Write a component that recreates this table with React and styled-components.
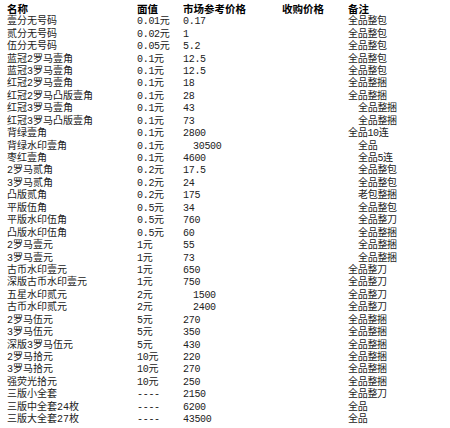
import React from "react";
import styled, { createGlobalStyle } from "styled-components";

const Global = createGlobalStyle`
  html, body { margin: 0; padding: 0; background: #fff; }
  body { font-family: "Liberation Mono", "Noto Sans CJK SC", monospace; }
`;

const Table = styled.div`
  width: 450px;
  height: 428px;
  padding: 2px 0 0 7px;
  box-sizing: border-box;
  overflow: hidden;
`;

const Row = styled.div`
  display: grid;
  grid-template-columns: 130px 46px 99px 66px 1fr;
  height: ${(p) => (p.$head ? "14px" : "12.44px")};
  align-items: center;
  white-space: nowrap;
`;

const Cell = styled.div`
  font-family: "Liberation Mono", "Noto Sans CJK SC", monospace;
  font-size: 10px;
  line-height: 12px;
  color: #222;
  padding-left: ${(p) => (p.$indent ? "10px" : "0")};
  letter-spacing: -0.3px;
`;

const Name = styled(Cell)`
  letter-spacing: 0;
`;

const HeadCell = styled.div`
  font-family: "Noto Sans CJK SC", sans-serif;
  font-weight: 700;
  font-size: 10.5px;
  line-height: 14px;
  color: #000;
`;

const rows = [
  ["壹分无号码", "0.01元", "0.17", "全品整包"],
  ["贰分无号码", "0.02元", "1", "全品整包"],
  ["伍分无号码", "0.05元", "5.2", "全品整包"],
  ["蓝冠2罗马壹角", "0.1元", "12.5", "全品整包"],
  ["蓝冠3罗马壹角", "0.1元", "12.5", "全品整包"],
  ["红冠2罗马壹角", "0.1元", "18", "全品整捆"],
  ["红冠2罗马凸版壹角", "0.1元", "28", "全品整捆"],
  ["红冠3罗马壹角", "0.1元", "43", "全品整捆", false, true],
  ["红冠3罗马凸版壹角", "0.1元", "73", "全品整捆", false, true],
  ["背绿壹角", "0.1元", "2800", "全品10连"],
  ["背绿水印壹角", "0.1元", "30500", "全品", true, true],
  ["枣红壹角", "0.1元", "4600", "全品5连", false, true],
  ["2罗马贰角", "0.2元", "17.5", "全品整包", false, true],
  ["3罗马贰角", "0.2元", "24", "全品整包", false, true],
  ["凸版贰角", "0.2元", "175", "老包整捆", false, true],
  ["平版伍角", "0.5元", "34", "全品整包", false, true],
  ["平版水印伍角", "0.5元", "760", "全品整刀", false, true],
  ["凸版水印伍角", "0.5元", "60", "全品整捆", false, true],
  ["2罗马壹元", "1元", "55", "全品整捆", false, true],
  ["3罗马壹元", "1元", "73", "全品整捆", false, true],
  ["古币水印壹元", "1元", "650", "全品整刀"],
  ["深版古币水印壹元", "1元", "750", "全品整刀"],
  ["五星水印贰元", "2元", "1500", "全品整刀", true],
  ["古币水印贰元", "2元", "2400", "全品整刀", true],
  ["2罗马伍元", "5元", "270", "全品整捆"],
  ["3罗马伍元", "5元", "350", "全品整捆"],
  ["深版3罗马伍元", "5元", "430", "全品整捆"],
  ["2罗马拾元", "10元", "220", "全品整捆"],
  ["3罗马拾元", "10元", "270", "全品整捆"],
  ["强荧光拾元", "10元", "250", "全品整捆"],
  ["三版小全套", "----", "2150", "全品整刀"],
  ["三版中全套24枚", "----", "6200", "全品"],
  ["三版大全套27枚", "----", "43500", "全品"],
];

export default function App() {
  return (
    <>
      <Global />
      <Table>
        <Row $head>
          <HeadCell>名称</HeadCell>
          <HeadCell>面值</HeadCell>
          <HeadCell>市场参考价格</HeadCell>
          <HeadCell>收购价格</HeadCell>
          <HeadCell>备注</HeadCell>
        </Row>
        {rows.map(([name, face, price, note, pi, ni]) => (
          <Row key={name}>
            <Name>{name}</Name>
            <Cell>{face}</Cell>
            <Cell $indent={pi}>{price}</Cell>
            <Cell></Cell>
            <Cell $indent={ni}>{note}</Cell>
          </Row>
        ))}
      </Table>
    </>
  );
}
